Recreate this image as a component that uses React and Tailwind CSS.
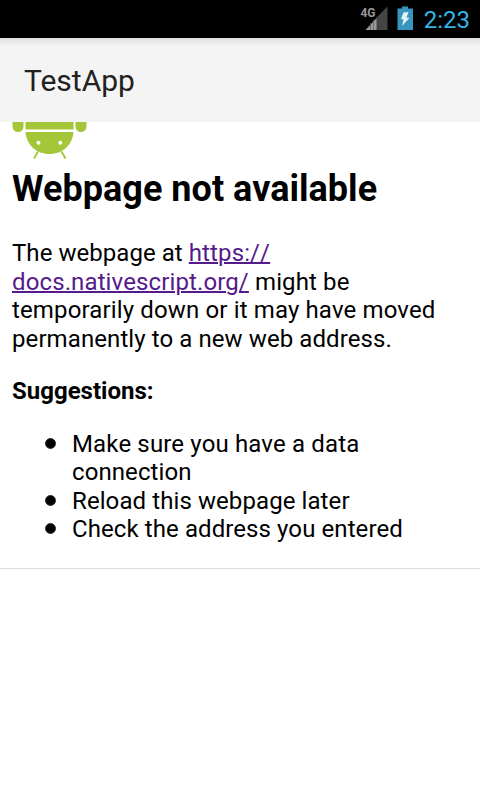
export default function App() {
  return (
    <div className="flex h-[800px] w-[480px] flex-col overflow-hidden bg-white font-[Roboto,sans-serif] text-black">
      <header className="flex h-[38px] shrink-0 items-center justify-end bg-black pr-[10px]">
        <svg className="h-[38px] w-[60px]" viewBox="357 0 60 38">
          <text x="360.500" y="17" fontSize="12.500" fontWeight="700" fill="#999" textLength="15" lengthAdjust="spacingAndGlyphs">4G</text>
          <path d="M387.500 6.500V30H376V18Z" fill="#444" />
          <path d="M376.500 18V30H365.500Z" fill="#999" />
          <path d="M370.500 23v7M373.500 20v10" stroke="#555" strokeWidth="0.700" />
          <path d="M402 6.500h6v2h5v21.500h-15.500V8.500h4.500Z" fill="#3796bd" />
          <path d="M403.500 12.500l5-0.500-2 5.500 3 0.500-7.500 8 1.500-6.500-2.500-0.500Z" fill="#e5f1f7" />
        </svg>
        <span className="ml-[7px] pt-[2px] text-[24px] text-[#33b5e5]">2:23</span>
      </header>
      <div className="flex h-[84px] shrink-0 items-center bg-[#f4f4f4] bg-linear-to-b from-[#dedede] to-[#f4f4f4] to-10% pl-6 text-[30px] text-[#212121]">TestApp</div>
      <main className="border-b border-[#ddd] px-3 pb-[24px] text-[24px] leading-[28.5px]">
        <svg className="block h-[38px] w-[76px]" viewBox="12 122 76 38">
          <path d="M12.500 122h11v4.500a5.500 5.500 0 0 1-11 0ZM75.500 122h11v4.500a5.500 5.500 0 0 1-11 0ZM25.500 122h48v7.500h-48ZM25.500 132h48c-1 13-11 22-24 22s-23-9-24-22Z" fill="#a4c639" />
          <path d="M38 151.500l-4 7M61.500 151.500l4 7" stroke="#a4c639" strokeWidth="1.800" />
          <circle cx="38.500" cy="142.700" r="2" fill="#fff" />
          <circle cx="60.300" cy="142.700" r="2" fill="#fff" />
        </svg>
        <h1 className="mt-[8px] text-[36px] font-bold leading-[42px] tracking-[0.03px]">Webpage not available</h1>
        <p className="mt-[29px] whitespace-nowrap tracking-[0.12px]">
          <span className="tracking-[0.05px]">The webpage at </span>
          <a className="text-[#551a8b] underline decoration-[1.5px]"><span className="[font-kerning:none]">https://</span><br />docs.nativescript.org/</a> might be<br />
          <span className="tracking-[0.14px]">temporarily down or it may have moved</span><br />
          <span className="tracking-[0.09px]">permanently to a new web address.</span>
        </p>
        <p className="mt-6 font-bold">Suggestions:</p>
        <ul className="mt-6 pl-[60px] tracking-[0.09px]">
          <li className="relative before:absolute before:-left-[27px] before:top-[8px] before:size-[11px] before:rounded-full before:border before:border-[#333] before:bg-black"><span className="tracking-[0.15px]">Make sure you have a data</span><br />connection</li>
          <li className="relative before:absolute before:-left-[27px] before:top-[8px] before:size-[11px] before:rounded-full before:border before:border-[#333] before:bg-black">Reload this webpage later</li>
          <li className="relative before:absolute before:-left-[27px] before:top-[8px] before:size-[11px] before:rounded-full before:border before:border-[#333] before:bg-black">Check the address you entered</li>
        </ul>
      </main>
    </div>
  );
}
